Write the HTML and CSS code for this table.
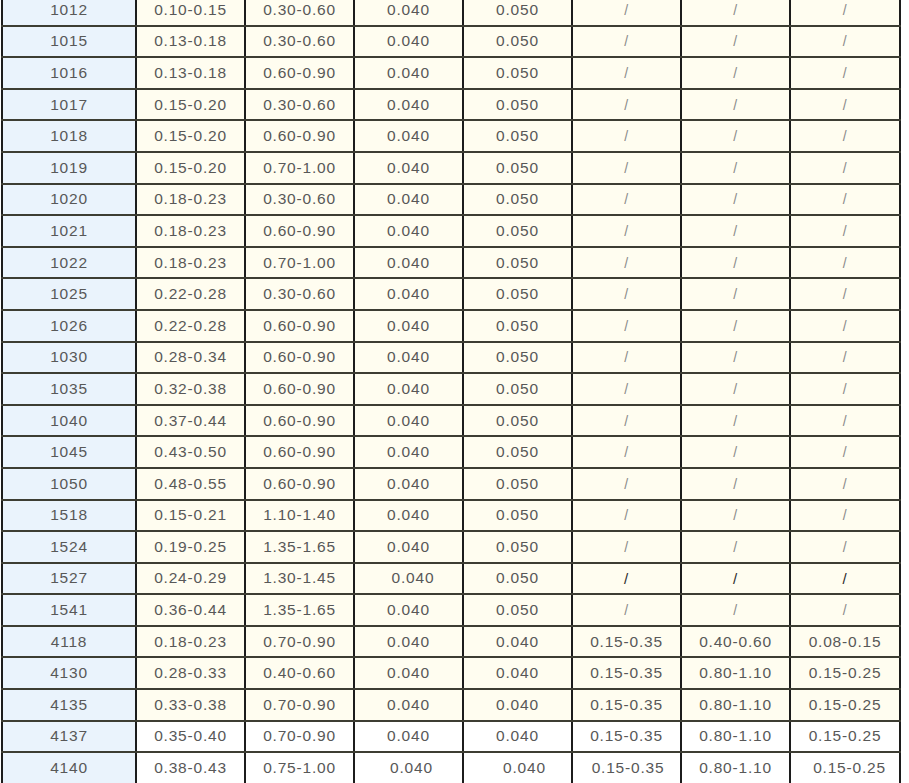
FILE: index.html
```html
<!DOCTYPE html>
<html>
<head>
<meta charset="utf-8">
<link rel="stylesheet" href="styles.css">
</head>
<body>
<table class="grade-table">
  <colgroup>
    <col class="c-grade"><col class="c-val"><col class="c-val"><col class="c-val"><col class="c-val"><col class="c-val"><col class="c-val"><col class="c-last">
  </colgroup>
  <tbody>
    <tr><td class="g">1012</td><td>0.10-0.15</td><td>0.30-0.60</td><td>0.040</td><td>0.050</td><td class="sl">/</td><td class="sl">/</td><td class="sl">/</td></tr>
    <tr><td class="g">1015</td><td>0.13-0.18</td><td>0.30-0.60</td><td>0.040</td><td>0.050</td><td class="sl">/</td><td class="sl">/</td><td class="sl">/</td></tr>
    <tr><td class="g">1016</td><td>0.13-0.18</td><td>0.60-0.90</td><td>0.040</td><td>0.050</td><td class="sl">/</td><td class="sl">/</td><td class="sl">/</td></tr>
    <tr><td class="g">1017</td><td>0.15-0.20</td><td>0.30-0.60</td><td>0.040</td><td>0.050</td><td class="sl">/</td><td class="sl">/</td><td class="sl">/</td></tr>
    <tr><td class="g">1018</td><td>0.15-0.20</td><td>0.60-0.90</td><td>0.040</td><td>0.050</td><td class="sl">/</td><td class="sl">/</td><td class="sl">/</td></tr>
    <tr><td class="g">1019</td><td>0.15-0.20</td><td>0.70-1.00</td><td>0.040</td><td>0.050</td><td class="sl">/</td><td class="sl">/</td><td class="sl">/</td></tr>
    <tr><td class="g">1020</td><td>0.18-0.23</td><td>0.30-0.60</td><td>0.040</td><td>0.050</td><td class="sl">/</td><td class="sl">/</td><td class="sl">/</td></tr>
    <tr><td class="g">1021</td><td>0.18-0.23</td><td>0.60-0.90</td><td>0.040</td><td>0.050</td><td class="sl">/</td><td class="sl">/</td><td class="sl">/</td></tr>
    <tr><td class="g">1022</td><td>0.18-0.23</td><td>0.70-1.00</td><td>0.040</td><td>0.050</td><td class="sl">/</td><td class="sl">/</td><td class="sl">/</td></tr>
    <tr><td class="g">1025</td><td>0.22-0.28</td><td>0.30-0.60</td><td>0.040</td><td>0.050</td><td class="sl">/</td><td class="sl">/</td><td class="sl">/</td></tr>
    <tr><td class="g">1026</td><td>0.22-0.28</td><td>0.60-0.90</td><td>0.040</td><td>0.050</td><td class="sl">/</td><td class="sl">/</td><td class="sl">/</td></tr>
    <tr><td class="g">1030</td><td>0.28-0.34</td><td>0.60-0.90</td><td>0.040</td><td>0.050</td><td class="sl">/</td><td class="sl">/</td><td class="sl">/</td></tr>
    <tr><td class="g">1035</td><td>0.32-0.38</td><td>0.60-0.90</td><td>0.040</td><td>0.050</td><td class="sl">/</td><td class="sl">/</td><td class="sl">/</td></tr>
    <tr><td class="g">1040</td><td>0.37-0.44</td><td>0.60-0.90</td><td>0.040</td><td>0.050</td><td class="sl">/</td><td class="sl">/</td><td class="sl">/</td></tr>
    <tr><td class="g">1045</td><td>0.43-0.50</td><td>0.60-0.90</td><td>0.040</td><td>0.050</td><td class="sl">/</td><td class="sl">/</td><td class="sl">/</td></tr>
    <tr><td class="g">1050</td><td>0.48-0.55</td><td>0.60-0.90</td><td>0.040</td><td>0.050</td><td class="sl">/</td><td class="sl">/</td><td class="sl">/</td></tr>
    <tr><td class="g">1518</td><td>0.15-0.21</td><td>1.10-1.40</td><td>0.040</td><td>0.050</td><td class="sl">/</td><td class="sl">/</td><td class="sl">/</td></tr>
    <tr><td class="g">1524</td><td>0.19-0.25</td><td>1.35-1.65</td><td>0.040</td><td>0.050</td><td class="sl">/</td><td class="sl">/</td><td class="sl">/</td></tr>
    <tr><td class="g">1527</td><td>0.24-0.29</td><td>1.30-1.45</td><td class="nudge-m">0.040</td><td>0.050</td><td class="sl dark">/</td><td class="sl dark">/</td><td class="sl dark">/</td></tr>
    <tr><td class="g">1541</td><td>0.36-0.44</td><td>1.35-1.65</td><td>0.040</td><td>0.050</td><td class="sl">/</td><td class="sl">/</td><td class="sl">/</td></tr>
    <tr><td class="g">4118</td><td>0.18-0.23</td><td>0.70-0.90</td><td>0.040</td><td>0.040</td><td>0.15-0.35</td><td>0.40-0.60</td><td>0.08-0.15</td></tr>
    <tr><td class="g">4130</td><td>0.28-0.33</td><td>0.40-0.60</td><td>0.040</td><td>0.040</td><td>0.15-0.35</td><td>0.80-1.10</td><td>0.15-0.25</td></tr>
    <tr><td class="g">4135</td><td>0.33-0.38</td><td>0.70-0.90</td><td>0.040</td><td>0.040</td><td>0.15-0.35</td><td>0.80-1.10</td><td>0.15-0.25</td></tr>
    <tr class="plain"><td class="g">4137</td><td>0.35-0.40</td><td>0.70-0.90</td><td>0.040</td><td>0.040</td><td>0.15-0.35</td><td>0.80-1.10</td><td>0.15-0.25</td></tr>
    <tr class="plain"><td class="g">4140</td><td>0.38-0.43</td><td>0.75-1.00</td><td class="nudge-s">0.040</td><td class="nudge-l">0.040</td><td class="nudge-xs">0.15-0.35</td><td>0.80-1.10</td><td class="nudge-m">0.15-0.25</td></tr>
  </tbody>
</table>
</body>
</html>
```

FILE: styles.css
```css
html, body {
  margin: 0;
  padding: 0;
  background: #ffffff;
}

.grade-table {
  border-collapse: collapse;
  table-layout: fixed;
  width: 900px;
  margin: -7px 0 0 1px;
  font-family: "Liberation Sans", Arial, sans-serif;
  font-size: 15.5px;
  letter-spacing: 0.8px;
  color: #585858;
}

.c-grade { width: 134px; }
.c-val { width: 109px; }
.c-last { width: 110px; }

.grade-table td {
  height: 29.6px;
  padding: 0;
  text-align: center;
  vertical-align: middle;
  background: #fffdf0;
  border-top: 2px solid #3d3d33;
  border-bottom: 2px solid #3d3d33;
  border-left: 2px solid #1c1c1c;
  border-right: 2px solid #1c1c1c;
  white-space: nowrap;
}

.grade-table td.g {
  background: #eaf3fc;
}

.grade-table tr.plain td {
  background: #ffffff;
}

.grade-table tr.plain td.g {
  background: #eaf3fc;
}

.grade-table td.sl {
  color: #8a8a8a;
  font-size: 14px;
}

.grade-table td.sl.dark {
  color: #2a2a2a;
  font-size: 15px;
}

.grade-table td.nudge-xs { padding-left: 3px; }
.grade-table td.nudge-s { padding-left: 6px; }
.grade-table td.nudge-m { padding-left: 9px; }
.grade-table td.nudge-l { padding-left: 14px; }
```
